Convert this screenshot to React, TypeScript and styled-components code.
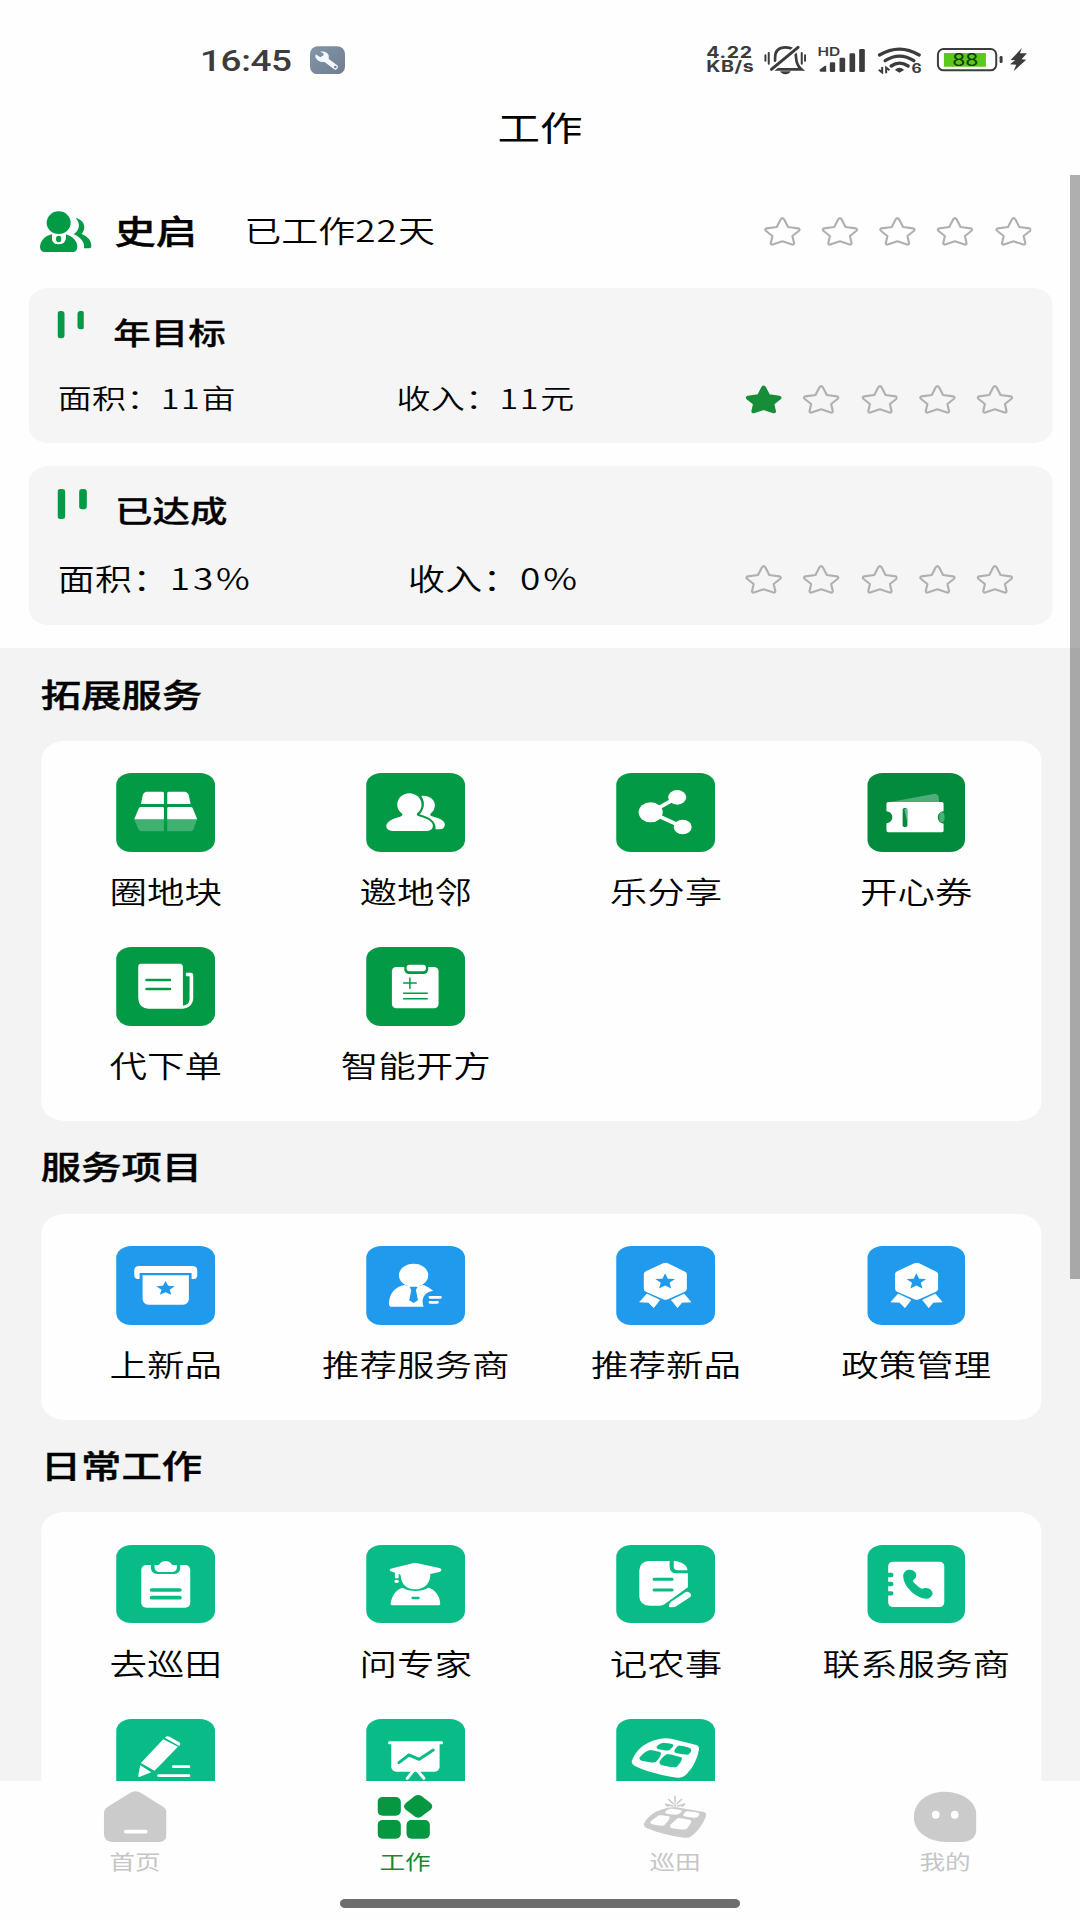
import React from "react";
import styled, { createGlobalStyle } from "styled-components";

const GREEN = "#039a45";
const DEEP_GREEN = "#038b3d";
const BLUE = "#1f9aec";
const TEAL = "#09bc87";
const GREY = "#cbcbcb";
const INK = "#3c3c3c";

/* The interface is laid out 864px wide and widened to the 1080px screen. */
const STRETCH = 1.25;

const GlobalStyle = createGlobalStyle`
  body {
    margin: 0;
    background: #fff;
    overflow: hidden;
  }
  * { box-sizing: border-box; }
`;

const Screen = styled.div`
  width: 864px;
  height: 1920px;
  display: flex;
  flex-direction: column;
  position: relative;
  overflow: hidden;
  background: #fefefe;
  color: #030303;
  font-family: "Noto Sans CJK SC", "Noto Sans", sans-serif;
  transform: scaleX(${STRETCH});
  transform-origin: 0 0;
`;

/* ---------- artwork helper ---------- */

interface ArtProps {
  box: [number, number, number, number];
  scale?: number;
  children: React.ReactNode;
}

const ArtSvg = styled.svg`
  display: block;
  flex: none;
`;

/* scale = artboard units per screen pixel, horizontally; vertically it is always 3. */
function Art({ box, scale = 3, children }: ArtProps) {
  return (
    <ArtSvg
      width={box[2] / scale / STRETCH}
      height={box[3] / 3}
      viewBox={box.join(" ")}
      preserveAspectRatio="none"
      fill="none"
    >
      {children}
    </ArtSvg>
  );
}

function starPoints(cx: number, cy: number, rx: number, ry: number, inner = 0.45) {
  const out: string[] = [];
  for (let i = 0; i < 10; i++) {
    const k = i % 2 ? inner : 1;
    const a = (Math.PI / 5) * i - Math.PI / 2;
    out.push(`${(cx + rx * k * Math.cos(a)).toFixed(1)},${(cy + ry * k * Math.sin(a)).toFixed(1)}`);
  }
  return out.join(" ");
}

/* ---------- status bar ---------- */

const StatusBar = styled.header`
  height: 102px;
  padding: 18px 42px 0 160px;
  display: flex;
  align-items: center;
  flex: none;
  color: ${INK};
`;

const Clock = styled.div`
  width: 88px;
  padding-top: 2px;
  font: 500 29.5px/30px Roboto, sans-serif;
  letter-spacing: -0.3px;
`;

const StatusRight = styled.div`
  margin-left: auto;
  display: flex;
  align-items: center;
`;

const Speed = styled.div`
  width: 45.6px;
  display: flex;
  flex-direction: column;
  font: 650 15.7px/14px Inter, sans-serif;
  letter-spacing: 0.5px;
  white-space: nowrap;
`;

const StatusItem = styled.div<{ $gap: number }>`
  position: relative;
  margin-right: ${(p) => p.$gap}px;
`;

const Tag = styled.span<{ $x: number; $y: number; $size: number; $weight?: number; $color?: string }>`
  position: absolute;
  left: ${(p) => p.$x}px;
  top: ${(p) => p.$y}px;
  font: ${(p) => p.$weight ?? 700} ${(p) => p.$size}px/1 Inter, sans-serif;
  color: ${(p) => p.$color ?? INK};
`;

function Status() {
  return (
    <StatusBar>
      <Clock>16:45</Clock>
      <Art box={[390, 76, 106, 86]}>
        <defs>
          <linearGradient id="tool" x1="0" y1="0" x2="1" y2="1">
            <stop offset="0" stopColor="#8396a8" />
            <stop offset="1" stopColor="#6f7d8f" />
          </linearGradient>
        </defs>
        <rect x="390" y="77" width="105" height="84" rx="23" fill="url(#tool)" />
        <path d="M434 115 L466 139" stroke="#f4f8ff" strokeWidth="15" strokeLinecap="round" />
        <path
          d="M420 93 Q440 90 446 104 Q449 120 434 124 Q413 126 406 109 L407 101 L421 110 L431 104 L430 98Z"
          fill="#f4f8ff"
        />
        <circle cx="466" cy="139" r="4" fill="#74859a" />
      </Art>
      <StatusRight>
        <Speed>
          <span>4.22</span>
          <span>KB/s</span>
        </Speed>
        <StatusItem $gap={9.3}>
          <Art box={[253, 75, 129, 90]}>
            <g stroke={INK} strokeWidth="8" strokeLinecap="round">
              <path d="M287 122 V113 C287 91 299 82 318 82 C337 82 349 91 350 112 C351 132 356 140 366 148 H282" />
              <path d="M258 106 V122 M268 99 V131 M367 99 V131 M377 106 V122" strokeWidth="6" />
              <path d="M276 148 L356 82" strokeWidth="18" stroke="#fefefe" />
              <path d="M276 148 L356 82" strokeWidth="9" />
            </g>
            <path d="M302 154 H334 Q329 163 318 163 Q307 163 302 154Z" fill={INK} />
          </Art>
        </StatusItem>
        <StatusItem $gap={10}>
          <Art box={[415, 75, 142, 90]}>
            <g fill={INK}>
              <path d="M421 149 L437 137 H441 V155 H425 Q421 155 421 149Z" />
              <rect x="452" y="127" width="16" height="29" rx="4" />
              <rect x="481" y="113" width="17" height="43" rx="4" />
              <rect x="511" y="100" width="17" height="56" rx="4" />
              <rect x="540" y="87" width="17" height="69" rx="4" />
            </g>
          </Art>
          <Tag $x={-0.4} $y={1.4} $size={12.4} $weight={600}>HD</Tag>
        </StatusItem>
        <StatusItem $gap={11.6}>
          <Art box={[594, 75, 132, 90]}>
            <g stroke={INK} strokeWidth="10" strokeLinecap="round">
              <path d="M600 105 Q660 70 719 105" />
              <path d="M617 122 Q660 95 703 122" />
              <path d="M635 138 Q660 121 686 138" />
            </g>
            <path d="M646 150 Q660 137 674 150 L660 158Z" fill={INK} />
            <path d="M608 141 V157 L598 149 M620 160 V143 L630 151" stroke={INK} strokeWidth="6" />
          </Art>
          <Tag $x={27} $y={18} $size={12.5}>6</Tag>
        </StatusItem>
        <StatusItem $gap={0}>
          <Art box={[766, 75, 274, 90]}>
            <rect x="771" y="87" width="175" height="64" rx="17" stroke={INK} strokeWidth="6" />
            <rect x="789" y="99" width="126" height="41" rx="2" fill="#5bc81c" />
            <rect x="956" y="108" width="9" height="21" rx="4" fill={INK} />
            <path d="M1023 84 L989 120 L1003 121 L987 133 L1006 134 L998 154 L1036 119 L1022 118 L1038 100 L1017 100Z" fill={INK} />
          </Art>
          <Tag $x={12.8} $y={7.3} $size={17} $weight={400} $color="#123d06">88</Tag>
        </StatusItem>
      </StatusRight>
    </StatusBar>
  );
}

/* ---------- headings and summary ---------- */

const PageTitle = styled.h1`
  margin: 0 0 22px;
  height: 50px;
  flex: none;
  text-align: center;
  font-size: 34px;
  font-weight: 400;
  line-height: 50px;
`;

const Content = styled.main`
  flex: 1;
  min-height: 0;
  overflow: hidden;
  background: #f3f3f3;
`;

const Summary = styled.section`
  background: #fefefe;
  padding: 0 21.6px 23px 22.8px;
`;

const Profile = styled.div`
  height: 114px;
  padding: 1px 17px 0 9.5px;
  display: flex;
  align-items: center;
`;

const Name = styled.strong`
  margin-left: 18px;
  width: 103.8px;
  padding-bottom: 3px;
  font-size: 33px;
  line-height: 40px;
  font-weight: 500;
  -webkit-text-stroke: 0.4px;
`;

const Days = styled.span`
  padding-bottom: 3px;
  font-size: 29.6px;
  line-height: 40px;
  font-weight: 350;
`;

const Num = styled.span<{ $gap: number }>`
  letter-spacing: ${(p) => p.$gap}px;
`;

const Stars = styled.div`
  margin-left: auto;
  display: flex;
  gap: 16.35px;
`;

const GoalCard = styled.article<{ $height: number }>`
  height: ${(p) => p.$height}px;
  border-radius: 16px;
  background: #f5f5f5;
  padding: 0 31.6px 0 23px;

  & + & { margin-top: 23px; }
`;

const GoalHead = styled.div<{ $height: number }>`
  display: flex;
  height: ${(p) => p.$height}px;
  padding-top: 23px;
`;

const GoalTitle = styled.h2<{ $left: number }>`
  margin: 0 0 0 ${(p) => p.$left}px;
  font-size: 30px;
  line-height: 41px;
  font-weight: 500;
  -webkit-text-stroke: 0.3px;
`;

const GoalRow = styled.div<{ $size: number; $lift: number }>`
  display: flex;
  align-items: center;
  height: 44px;
  padding-left: 0.4px;
  font-size: ${(p) => p.$size}px;
  font-weight: 350;

  & > span { padding-bottom: ${(p) => p.$lift}px; }
`;

const Metric = styled.span<{ $width: number }>`
  width: ${(p) => p.$width}px;
  white-space: nowrap;
  letter-spacing: 0.3px;
`;

function Rating({ value }: { value: number }) {
  return (
    <Stars>
      {[0, 1, 2, 3, 4].map((i) => (
        <Art key={i} box={[0, 0, 112, 88]}>
          <path
            d="M51 7 Q56 0 61 7 L73 30 L103 34 Q111 37 105 42 L86 57 L91 79 Q90 85 83 82 L56 73 L29 82 Q22 85 21 79 L26 57 L7 42 Q1 37 9 34 L39 30Z"
            fill={i < value ? "#168d38" : "none"}
            stroke={i < value ? "#168d38" : "#b0b0b0"}
            strokeWidth={i < value ? 4 : 6.5}
            strokeLinejoin="round"
          />
        </Art>
      ))}
    </Stars>
  );
}

/* ---------- tile artwork ---------- */

type IconName =
  | "plot" | "invite" | "share" | "coupon" | "order" | "recipe"
  | "launch" | "agent" | "medal"
  | "patrol" | "expert" | "note" | "contact" | "write" | "board" | "field";

const icons: Record<IconName, { box: [number, number, number, number]; scale?: number; art: (bg: string) => React.ReactNode }> = {
  plot: {
    box: [288, 98, 296, 236],
    art: () => (
      <g fill="#fff">
        <path d="M378 154 H427 Q431 154 431 158 V191 H362 L367 167 Q370 155 378 154Z" />
        <path d="M446 154 H493 Q503 155 506 166 L511 191 H441 V158 Q441 154 446 154Z" />
        <path d="M361 200 H427 Q431 200 431 204 V237 H342 L355 205 Q357 201 361 200Z" />
        <path d="M446 200 H512 Q517 201 518 205 L531 237 H441 V204 Q441 200 446 200Z" />
        <path opacity=".24" d="M342 237 H431 V273 H363 Q357 272 354 266Z M441 237 H531 L520 266 Q518 273 510 273 H441Z" />
      </g>
    ),
  },
  invite: {
    box: [1040, 98, 295, 236],
    art: () => (
      <g fill="#fff">
        <path d="M1169 159 C1190 159 1206 174 1206 193 C1206 204 1201 212 1193 219 Q1189 224 1196 227 C1222 234 1240 243 1240 257 Q1239 271 1222 272 H1119 Q1101 271 1100 258 C1100 243 1122 235 1145 228 Q1152 223 1146 219 C1138 212 1133 204 1133 193 C1133 174 1149 159 1169 159Z" />
        <path d="M1205 167 C1228 164 1246 178 1246 195 Q1246 209 1234 219 Q1229 225 1237 228 C1258 233 1276 241 1276 253 Q1274 266 1262 267 H1248 C1250 243 1232 231 1200 222 C1216 205 1217 184 1205 167Z" />
      </g>
    ),
  },
  share: {
    box: [222, 98, 286, 236],
    scale: 2.904,
    art: () => (
      <g fill="#fff">
        <path d="M322 216 L399 171 M322 216 L415 260" stroke="#fff" strokeWidth="11" />
        <ellipse cx="322" cy="216" rx="35" ry="30" />
        <ellipse cx="399" cy="171" rx="26" ry="22" />
        <ellipse cx="415" cy="260" rx="26" ry="22" />
      </g>
    ),
  },
  coupon: {
    box: [950, 98, 285, 236],
    scale: 2.904,
    art: () => (
      <g fill="#fff">
        <path opacity=".3" d="M1012 186 L1145 160 Q1154 160 1156 168 L1158 186Z" />
        <ellipse cx="1166" cy="231" rx="8" ry="15" opacity=".3" />
        <path d="M1010 185 H1166 Q1171 186 1171 190 V213 C1149 214 1149 248 1171 250 V271 Q1171 276 1165 276 H1010 Q1005 276 1005 270 V249 C1028 247 1028 215 1005 213 V190 Q1005 185 1010 185Z" />
        <rect x="1052" y="203" width="14" height="57" rx="5" fill="#038b3d" />
        <path opacity=".4" d="M1057 207 L1065 204 V242Z" />
      </g>
    ),
  },
  order: {
    box: [288, 622, 296, 236],
    art: (bg) => (
      <>
        <path
          d="M361 672 H479 Q488 673 488 682 V798 C501 796 508 790 508 776 V710 H497 V699 H513 Q519 700 519 707 V776 C518 795 505 806 488 807 H384 Q355 805 354 776 V679 Q354 673 361 672Z"
          fill="#fff"
        />
        <path d="M379 721 H449 M379 748 H449" stroke={bg} strokeWidth="8" strokeLinecap="round" />
      </>
    ),
  },
  recipe: {
    box: [1040, 622, 295, 236],
    art: (bg) => (
      <>
        <rect x="1117" y="682" width="140" height="124" rx="13" fill="#fff" />
        <rect x="1154" y="668" width="72" height="35" rx="14" fill={bg} />
        <rect x="1161" y="675" width="58" height="20" rx="9" fill="#fff" />
        <path d="M1152 730 H1190 M1171 715 V746 M1152 761 H1223 M1152 777 H1223" stroke={bg} strokeWidth="4.5" strokeLinecap="round" />
      </>
    ),
  },
  launch: {
    box: [288, 348, 296, 236],
    art: (bg) => (
      <>
        <path d="M354 408 H519 Q531 409 531 421 V438 Q529 447 521 447 H514 V429 H358 V447 H351 Q343 446 342 438 V421 Q343 409 354 408Z" fill="#fff" />
        <path d="M367 436 H506 V507 Q505 523 488 524 H385 Q368 523 367 507Z" fill="#fff" />
        <polygon points={starPoints(436, 476, 29, 23)} fill={bg} />
      </>
    ),
  },
  agent: {
    box: [1040, 348, 295, 236],
    art: (bg) => (
      <>
        <ellipse cx="1182" cy="436" rx="44" ry="35" fill="#fff" />
        <path d="M1154 465 L1165 468 H1199 L1210 464 Q1230 471 1241 482 C1214 486 1203 506 1212 530 H1113 Q1108 529 1108 522 C1108 490 1130 468 1154 465Z" fill="#fff" />
        <path d="M1170 470 H1194 L1189 480 L1195 511 L1182 519 L1169 511 L1175 480Z" fill={bg} />
        <path d="M1231 502 H1263 M1231 517 H1254" stroke="#fff" strokeWidth="8" strokeLinecap="round" />
      </>
    ),
  },
  medal: {
    box: [222, 348, 286, 236],
    scale: 2.904,
    art: (bg) => (
      <>
        <path
          d="M358 400 Q365 397 372 400 L422 425 Q427 427 427 432 V476 Q427 482 421 485 L372 508 Q365 511 358 508 L308 485 Q302 482 302 476 V432 Q302 427 308 424Z"
          fill="#fff"
        />
        <polygon points={starPoints(364, 455, 30, 25)} fill={bg} />
        <path d="M311 492 L348 510 L331 533 L315 517 L290 516Z M419 492 L382 510 L400 533 L413 517 L439 516Z" fill="#fff" stroke="#fff" strokeWidth="2" strokeLinejoin="round" />
      </>
    ),
  },
  patrol: {
    box: [288, 135, 296, 236],
    art: (bg) => (
      <>
        <rect x="363" y="195" width="147" height="128" rx="15" fill="#fff" />
        <path d="M392 186 H480 V205 Q479 221 462 222 H411 Q394 221 392 205Z" fill={bg} />
        <path d="M403 195 H416 C424 179 448 179 456 195 H470 V203 Q469 215 456 216 H418 Q404 215 403 203Z" fill="#fff" />
        <path d="M394 270 H479 M394 293 H479" stroke={bg} strokeWidth="11" strokeLinecap="round" />
      </>
    ),
  },
  expert: {
    box: [1040, 135, 295, 236],
    art: (bg) => (
      <>
        <path
          d="M1180 190 Q1187 188 1194 190 L1262 205 Q1269 210 1262 215 L1232 222 V230 C1228 255 1210 268 1187 268 C1163 268 1145 255 1143 225 L1137 221 V235 H1126 V218 L1112 213 Q1108 209 1113 206Z"
          fill="#fff"
        />
        <ellipse cx="1131" cy="244" rx="7" ry="5" fill="#fff" />
        <path d="M1149 263 C1170 276 1205 276 1226 263 C1246 267 1262 290 1262 312 Q1262 316 1257 316 H1118 Q1113 316 1113 311 C1116 290 1128 268 1149 263Z" fill="#fff" />
        <path d="M1179 294 H1197" stroke={bg} strokeWidth="7" strokeLinecap="round" />
      </>
    ),
  },
  note: {
    box: [222, 135, 286, 236],
    scale: 2.904,
    art: (bg) => (
      <>
        <path d="M317 183 H377 V200 Q378 219 397 220 H430 V262 L362 313 Q356 317 348 317 H319 Q290 315 289 290 V211 Q290 185 317 183Z" fill="#fff" />
        <path d="M389 183 C412 184 428 196 429 211 H401 Q389 210 389 200Z" fill="#fff" />
        <path d="M332 238 H384 M332 270 H384" stroke={bg} strokeWidth="9" strokeLinecap="round" />
        <path d="M375 321 Q375 310 383 304 L424 276 Q430 274 436 279 Q442 285 437 291 L396 319 Q390 323 375 321Z" fill="#fff" />
      </>
    ),
  },
  contact: {
    box: [950, 135, 285, 236],
    scale: 2.904,
    art: (bg) => (
      <>
        <rect x="1010" y="185" width="163" height="136" rx="14" fill="#fff" />
        <path d="M1008 225 H1019 M1008 252 H1019 M1008 280 H1019" stroke={bg} strokeWidth="13" strokeLinecap="round" />
        <path
          d="M1054 232 C1052 215 1065 207 1078 210 C1092 214 1095 228 1088 236 Q1078 240 1085 248 L1100 262 Q1106 268 1113 265 C1126 260 1140 270 1139 282 C1136 294 1125 299 1110 295 C1080 285 1055 255 1054 232Z"
          fill={bg}
        />
      </>
    ),
  },
  write: {
    box: [288, 657, 296, 236],
    art: () => (
      <>
        <path d="M429 718 L473 740 L403 812 L362 789Z M360 796 L393 817 L357 831 Q353 831 354 827Z M434 713 Q440 706 448 710 L477 727 Q483 732 477 738Z" fill="#fff" />
        <path d="M459 800 H506 M415 827 H506" stroke="#fff" strokeWidth="8" strokeLinecap="round" />
      </>
    ),
  },
  board: {
    box: [1040, 657, 295, 236],
    art: (bg) => (
      <>
        <path d="M1115 728 H1260 V802 Q1258 814 1246 815 H1130 Q1117 814 1115 802Z" fill="#fff" />
        <path d="M1110 728 H1266 M1180 814 L1163 835 M1195 814 L1213 835" stroke="#fff" strokeWidth="9" strokeLinecap="round" />
        <path d="M1138 788 L1168 765 L1199 778 L1241 750" stroke={bg} strokeWidth="9" strokeLinecap="round" strokeLinejoin="round" />
      </>
    ),
  },
  field: {
    box: [222, 657, 286, 236],
    scale: 2.904,
    art: (bg) => (
      <>
        <path
          d="M347 717 Q365 713 385 717 L455 735 Q464 739 462 750 C455 785 440 810 420 828 Q412 834 400 833 C360 828 310 815 275 797 Q266 791 267 783 C280 750 300 728 347 717Z"
          fill="#fff"
        />
        <g fill={bg}>
          <path d="M356 729 Q362 727 386 733 Q393 737 376 751 Q371 753 343 747 Q335 744 343 736 Q349 730 356 729Z" />
          <path d="M403 737 Q408 736 434 743 Q446 748 433 763 Q428 766 396 759 Q387 756 393 748 Q398 738 403 737Z" />
          <path d="M320 750 Q326 750 350 756 Q357 763 337 786 Q332 790 296 782 Q286 778 291 771 Q304 754 320 750Z" />
          <path d="M371 762 Q378 762 411 772 Q418 779 398 800 Q392 805 353 795 Q344 791 349 782 Q362 764 371 762Z" />
        </g>
      </>
    ),
  },
};

/* ---------- service panels ---------- */

const SectionTitle = styled.h2`
  margin: 0;
  height: 92.3px;
  padding-left: 32.6px;
  font-size: 32.3px;
  line-height: 88px;
  font-weight: 500;
  -webkit-text-stroke: 0.4px;
`;

const Sections = styled.div`
  padding-top: 0.6px;
`;

const Panel = styled.div`
  width: 800.5px;
  margin-left: 32.5px;
  padding-top: 32.2px;
  display: grid;
  grid-template-columns: repeat(4, 1fr);
  grid-auto-rows: 174.2px;
  border-radius: 19px;
  background: #fefefe;
`;

const Service = styled.div`
  display: flex;
  flex-direction: column;
  align-items: center;
`;

const Tile = styled.div<{ $bg: string }>`
  width: 78.7px;
  height: 78.6px;
  border-radius: 12px;
  overflow: hidden;
  background: ${(p) => p.$bg};
`;

const Label = styled.span`
  margin-top: 16.4px;
  font-size: 30px;
  line-height: 44px;
  font-weight: 350;
  white-space: nowrap;
`;

interface Entry { label: string; icon: IconName; bg?: string }

const sections: { title: string; color: string; items: Entry[] }[] = [
  {
    title: "拓展服务",
    color: GREEN,
    items: [
      { label: "圈地块", icon: "plot" },
      { label: "邀地邻", icon: "invite" },
      { label: "乐分享", icon: "share" },
      { label: "开心券", icon: "coupon", bg: DEEP_GREEN },
      { label: "代下单", icon: "order" },
      { label: "智能开方", icon: "recipe" },
    ],
  },
  {
    title: "服务项目",
    color: BLUE,
    items: [
      { label: "上新品", icon: "launch" },
      { label: "推荐服务商", icon: "agent" },
      { label: "推荐新品", icon: "medal" },
      { label: "政策管理", icon: "medal" },
    ],
  },
  {
    title: "日常工作",
    color: TEAL,
    items: [
      { label: "去巡田", icon: "patrol" },
      { label: "问专家", icon: "expert" },
      { label: "记农事", icon: "note" },
      { label: "联系服务商", icon: "contact" },
      { label: "", icon: "write" },
      { label: "", icon: "board" },
      { label: "", icon: "field" },
    ],
  },
];

/* ---------- bottom navigation ---------- */

const TabBar = styled.nav`
  height: 139px;
  flex: none;
  display: flex;
  flex-direction: column;
  align-items: center;
  background: #fefefe;
`;

const Tabs = styled.div`
  width: 100%;
  height: 118px;
  display: grid;
  grid-template-columns: repeat(4, 1fr);
`;

const Tab = styled.div<{ $active?: boolean }>`
  display: flex;
  flex-direction: column;
  align-items: center;
  color: ${(p) => (p.$active ? "#168a3a" : "#c6c6c6")};
  font-size: 20.5px;
  line-height: 30px;
  font-weight: 400;
`;

const TabIcon = styled.div`
  height: 64.8px;
  padding-top: 10px;
`;

const HomeIndicator = styled.div`
  width: 319.6px;
  height: 8.5px;
  border-radius: 4px;
  background: #6d6d6d;
`;

const ScrollThumb = styled.div`
  position: absolute;
  top: 174.5px;
  right: 0;
  width: 8.2px;
  height: 1104.5px;
  background: rgba(0, 0, 0, 0.31);
`;

function Navigation() {
  return (
    <TabBar>
      <Tabs>
        <Tab>
          <TabIcon>
            <Art box={[250, 873, 190, 154]}>
              <path d="M330 878 Q345 869 361 878 L428 920 Q440 928 440 942 V1002 Q438 1025 416 1026 H275 Q252 1024 250 1002 V942 Q250 928 262 920Z" fill={GREY} />
              <path d="M316 995 H376" stroke="#fff" strokeWidth="11" strokeLinecap="round" />
            </Art>
          </TabIcon>
          首页
        </Tab>
        <Tab $active>
          <TabIcon>
            <Art box={[1073, 873, 165, 154]}>
              <g fill="#059841">
                <rect x="1073" y="891" width="70" height="56" rx="15" />
                <rect x="1073" y="960" width="70" height="56" rx="15" />
                <rect x="1160" y="960" width="70" height="56" rx="15" />
                <path d="M1184 889 Q1195 881 1206 889 L1232 909 Q1243 919 1232 929 L1206 949 Q1195 957 1184 949 L1158 929 Q1147 919 1158 909Z" />
              </g>
            </Art>
          </TabIcon>
          工作
        </Tab>
        <Tab>
          <TabIcon>
            <Art box={[300, 873, 182, 154]} scale={2.904}>
              <path d="M365 925 Q378 920 395 922 L475 936 Q484 938 481 948 C472 975 455 995 438 1009 Q430 1015 418 1013 C380 1008 340 998 306 983 Q298 978 301 970 C315 945 335 932 365 925Z" fill={GREY} />
              <g fill="#fefefe">
                <path d="M374 927 Q380 925 408 930 Q415 934 400 943 Q395 946 366 941 Q359 938 365 932Z" />
                <path d="M424 934 Q430 932 458 938 Q467 941 455 952 Q450 956 418 949 Q412 946 416 941Z" />
                <path d="M344 946 Q350 944 374 949 Q380 954 360 975 Q355 980 323 972 Q316 969 322 962Z" />
                <path d="M399 954 Q406 953 436 960 Q443 964 425 986 Q419 992 380 984 Q373 980 379 973Z" />
              </g>
              <path d="M391 908 V887 M387 913 L371 897 M395 913 L411 897 M386 919 L362 912 L372 920 M396 919 L420 912 L410 920 M391 911 V922" stroke={GREY} strokeWidth="4.5" />
            </Art>
          </TabIcon>
          巡田
        </Tab>
        <Tab>
          <TabIcon>
            <Art box={[1085, 873, 184, 154]} scale={2.904}>
              <path d="M1175 875 C1228 876 1268 905 1268 950 V985 Q1266 1026 1222 1026 H1180 C1125 1024 1085 995 1085 950 C1087 905 1125 875 1175 875Z" fill={GREY} />
              <ellipse cx="1149" cy="944" rx="11" ry="12" fill="#fff" />
              <ellipse cx="1204" cy="944" rx="11" ry="12" fill="#fff" />
            </Art>
          </TabIcon>
          我的
        </Tab>
      </Tabs>
      <HomeIndicator />
    </TabBar>
  );
}

export default function App() {
  return (
    <>
      <GlobalStyle />
      <Screen>
        <Status />
        <PageTitle>工作</PageTitle>
        <Content>
          <Summary>
            <Profile>
              <Art box={[61, 62, 155, 125]}>
                <g fill={GREEN}>
                  <ellipse cx="117" cy="97" rx="36" ry="34" />
                  <path d="M97 132 V145 Q99 162 117 162 Q136 160 138 145 V132 C157 137 173 150 173 170 Q172 185 158 186 H76 Q62 185 61 170 C62 150 78 136 97 132Z" />
                  <path d="M168 83 C185 87 195 98 194 113 Q193 123 186 131 C203 138 216 150 215 170 Q213 174 208 174 H193 C196 155 182 140 162 132 C182 118 182 98 168 83Z" />
                  <path d="M97 132 H138 V145 Q136 161 117 161 Q99 161 97 145Z" fill="#fff" />
                  <ellipse cx="117" cy="146" rx="8" ry="10" />
                </g>
              </Art>
              <Name>史启</Name>
              <Days>
                已工作<Num $gap={0.8}>22</Num>天
              </Days>
              <Rating value={0} />
            </Profile>
            <GoalCard $height={155}>
              <GoalHead $height={90}>
                <Art box={[112, 363, 81, 83]}>
                  <rect x="112" y="363" width="21" height="82" rx="9" fill={GREEN} />
                  <rect x="172" y="363" width="21" height="55" rx="9" fill={GREEN} />
                </Art>
                <GoalTitle $left={23.3}>年目标</GoalTitle>
              </GoalHead>
              <GoalRow $size={27.2} $lift={6}>
                <Metric $width={271}>面积：<Num $gap={1.3}>11</Num>亩</Metric>
                <Metric $width={200}>收入：<Num $gap={1.3}>11</Num>元</Metric>
                <Rating value={1} />
              </GoalRow>
            </GoalCard>
            <GoalCard $height={159}>
              <GoalHead $height={92}>
                <Art box={[112, 117, 89, 91]}>
                  <rect x="112" y="117" width="23" height="90" rx="9" fill={GREEN} />
                  <rect x="177" y="117" width="23" height="61" rx="9" fill={GREEN} />
                </Art>
                <GoalTitle $left={22.5}>已达成</GoalTitle>
              </GoalHead>
              <GoalRow $size={29.6} $lift={5}>
                <Metric $width={280.2}>面积：<Num $gap={2.2}>13%</Num></Metric>
                <Metric $width={190}>收入：<Num $gap={2.2}>0%</Num></Metric>
                <Rating value={0} />
              </GoalRow>
            </GoalCard>
          </Summary>
          <Sections>
            {sections.map((s) => (
              <section key={s.title}>
                <SectionTitle>{s.title}</SectionTitle>
                <Panel>
                  {s.items.map((item, i) => {
                    const bg = item.bg ?? s.color;
                    const icon = icons[item.icon];
                    return (
                      <Service key={i}>
                        <Tile $bg={bg}>
                          <Art box={icon.box} scale={icon.scale}>{icon.art(bg)}</Art>
                        </Tile>
                        {item.label && <Label>{item.label}</Label>}
                      </Service>
                    );
                  })}
                </Panel>
              </section>
            ))}
          </Sections>
        </Content>
        <Navigation />
        <ScrollThumb />
      </Screen>
    </>
  );
}
